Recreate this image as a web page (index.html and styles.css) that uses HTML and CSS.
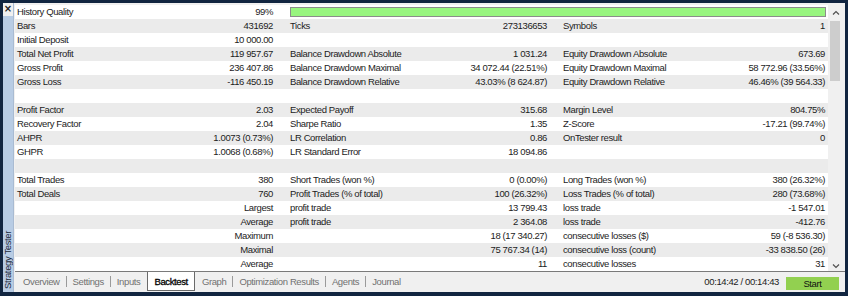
FILE: index.html
```html
<!DOCTYPE html>
<html>
<head>
<meta charset="utf-8">
<link rel="stylesheet" href="styles.css">
</head>
<body>
<div class="window">
  <div class="sidebar">
    <div class="close">×</div>
    <div class="strip"><span class="vlabel">Strategy Tester</span></div>
  </div>
  <div class="main">
    <div class="top">
      <div class="table">
        <div class="row">
          <div class="cell c1"><span>History Quality</span><span>99%</span></div>
          <div class="cell barcell"><div class="bar"></div></div>
        </div>
        <div class="row">
          <div class="cell c1"><span>Bars</span><span>431692</span></div>
          <div class="cell c2"><span>Ticks</span><span>273136653</span></div>
          <div class="cell c3"><span>Symbols</span><span>1</span></div>
        </div>
        <div class="row">
          <div class="cell c1"><span>Initial Deposit</span><span>10 000.00</span></div>
          <div class="cell c2"></div>
          <div class="cell c3"></div>
        </div>
        <div class="row">
          <div class="cell c1"><span>Total Net Profit</span><span>119 957.67</span></div>
          <div class="cell c2"><span>Balance Drawdown Absolute</span><span>1 031.24</span></div>
          <div class="cell c3"><span>Equity Drawdown Absolute</span><span>673.69</span></div>
        </div>
        <div class="row">
          <div class="cell c1"><span>Gross Profit</span><span>236 407.86</span></div>
          <div class="cell c2"><span>Balance Drawdown Maximal</span><span>34 072.44 (22.51%)</span></div>
          <div class="cell c3"><span>Equity Drawdown Maximal</span><span>58 772.96 (33.56%)</span></div>
        </div>
        <div class="row">
          <div class="cell c1"><span>Gross Loss</span><span>-116 450.19</span></div>
          <div class="cell c2"><span>Balance Drawdown Relative</span><span>43.03% (8 624.87)</span></div>
          <div class="cell c3"><span>Equity Drawdown Relative</span><span>46.46% (39 564.33)</span></div>
        </div>
        <div class="row">
          <div class="cell c1"></div><div class="cell c2"></div><div class="cell c3"></div>
        </div>
        <div class="row">
          <div class="cell c1"><span>Profit Factor</span><span>2.03</span></div>
          <div class="cell c2"><span>Expected Payoff</span><span>315.68</span></div>
          <div class="cell c3"><span>Margin Level</span><span>804.75%</span></div>
        </div>
        <div class="row">
          <div class="cell c1"><span>Recovery Factor</span><span>2.04</span></div>
          <div class="cell c2"><span>Sharpe Ratio</span><span>1.35</span></div>
          <div class="cell c3"><span>Z-Score</span><span>-17.21 (99.74%)</span></div>
        </div>
        <div class="row">
          <div class="cell c1"><span>AHPR</span><span>1.0073 (0.73%)</span></div>
          <div class="cell c2"><span>LR Correlation</span><span>0.86</span></div>
          <div class="cell c3"><span>OnTester result</span><span>0</span></div>
        </div>
        <div class="row">
          <div class="cell c1"><span>GHPR</span><span>1.0068 (0.68%)</span></div>
          <div class="cell c2"><span>LR Standard Error</span><span>18 094.86</span></div>
          <div class="cell c3"></div>
        </div>
        <div class="row">
          <div class="cell c1"></div><div class="cell c2"></div><div class="cell c3"></div>
        </div>
        <div class="row">
          <div class="cell c1"><span>Total Trades</span><span>380</span></div>
          <div class="cell c2"><span>Short Trades (won %)</span><span>0 (0.00%)</span></div>
          <div class="cell c3"><span>Long Trades (won %)</span><span>380 (26.32%)</span></div>
        </div>
        <div class="row">
          <div class="cell c1"><span>Total Deals</span><span>760</span></div>
          <div class="cell c2"><span>Profit Trades (% of total)</span><span>100 (26.32%)</span></div>
          <div class="cell c3"><span>Loss Trades (% of total)</span><span>280 (73.68%)</span></div>
        </div>
        <div class="row">
          <div class="cell c1"><span></span><span>Largest</span></div>
          <div class="cell c2"><span>profit trade</span><span>13 799.43</span></div>
          <div class="cell c3"><span>loss trade</span><span>-1 547.01</span></div>
        </div>
        <div class="row">
          <div class="cell c1"><span></span><span>Average</span></div>
          <div class="cell c2"><span>profit trade</span><span>2 364.08</span></div>
          <div class="cell c3"><span>loss trade</span><span>-412.76</span></div>
        </div>
        <div class="row">
          <div class="cell c1"><span></span><span>Maximum</span></div>
          <div class="cell c2"><span></span><span>18 (17 340.27)</span></div>
          <div class="cell c3"><span>consecutive losses ($)</span><span>59 (-8 536.30)</span></div>
        </div>
        <div class="row">
          <div class="cell c1"><span></span><span>Maximal</span></div>
          <div class="cell c2"><span></span><span>75 767.34 (14)</span></div>
          <div class="cell c3"><span>consecutive loss (count)</span><span>-33 838.50 (26)</span></div>
        </div>
        <div class="row">
          <div class="cell c1"><span></span><span>Average</span></div>
          <div class="cell c2"><span></span><span>11</span></div>
          <div class="cell c3"><span>consecutive losses</span><span>31</span></div>
        </div>
      </div>
      <div class="scrollbar">
        <svg class="arrow" width="8" height="5" viewBox="0 0 8 5"><path d="M1 4.5 L4 1.5 L7 4.5" fill="none" stroke="#505050" stroke-width="1.2"/></svg>
        <div class="thumb"></div>
        <div class="track"></div>
        <svg class="arrow" width="8" height="5" viewBox="0 0 8 5"><path d="M1 0.5 L4 3.5 L7 0.5" fill="none" stroke="#505050" stroke-width="1.2"/></svg>
      </div>
    </div>
    <div class="tabbar">
      <span class="tab">Overview</span><span class="sep"></span>
      <span class="tab">Settings</span><span class="sep"></span>
      <span class="tab">Inputs</span>
      <span class="tab active">Backtest</span>
      <span class="tab">Graph</span><span class="sep"></span>
      <span class="tab">Optimization Results</span><span class="sep"></span>
      <span class="tab">Agents</span><span class="sep"></span>
      <span class="tab">Journal</span>
      <span class="time">00:14:42 / 00:14:43</span>
      <span class="start">Start</span>
    </div>
  </div>
</div>
</body>
</html>
```

FILE: styles.css
```css
html, body {
  margin: 0;
  padding: 0;
  background: #112540;
}
body {
  width: 848px;
  height: 296px;
  overflow: hidden;
  font-family: "Liberation Sans", Arial, sans-serif;
  font-size: 9.5px;
  letter-spacing: -0.38px;
  color: #1c1c1c;
}
.window {
  margin: 3px 0 0 3px;
  width: 842px;
  height: 289px;
  background: #f0f0f0;
  display: flex;
}
.sidebar {
  width: 10px;
  border-right: 1px solid #a9bbd2;
  display: flex;
  flex-direction: column;
}
.close {
  height: 13px;
  line-height: 11px;
  text-align: center;
  font-family: "DejaVu Sans", sans-serif;
  font-size: 10px;
  font-weight: bold;
  letter-spacing: 0;
  color: #222;
  background: #f0f0f0;
}
.strip {
  flex: 1;
  background: #b8cce4;
  display: flex;
  flex-direction: column;
  justify-content: flex-end;
  align-items: center;
  padding-bottom: 3px;
}
.vlabel {
  writing-mode: vertical-rl;
  transform: rotate(180deg);
  font-size: 9.5px;
  line-height: 10px;
  color: #1d2a3a;
  white-space: nowrap;
}
.main {
  flex: 1;
  display: flex;
  flex-direction: column;
  padding-left: 1px;
}
.top {
  display: flex;
  padding-top: 2px;
  height: 266px;
}
.table {
  width: 813px;
  display: flex;
  flex-direction: column;
}
.row {
  display: grid;
  grid-template-columns: 271px 274px 268px;
  height: 14px;
  line-height: 14px;
  background: #ffffff;
}
.row:nth-child(even) {
  background: #ebebeb;
}
.cell {
  display: flex;
  justify-content: space-between;
  white-space: nowrap;
  overflow: hidden;
}
.c1 { padding: 0 13px 0 2px; }
.c2 { padding: 0 13px 0 4px; }
.c3 { padding: 0 3px 0 3px; }
.barcell {
  grid-column: 2 / span 2;
  padding: 2px 2px 2px 4px;
}
.bar {
  flex: 1;
  background: #98f57f;
  border: 1px solid #8c8c8c;
}
.scrollbar {
  width: 15px;
  display: flex;
  flex-direction: column;
  align-items: center;
  background: #f0f0f0;
  padding-top: 5px;
}
.arrow {
  display: block;
  margin: 0 0 6px 1px;
}
.thumb {
  width: 10px;
  height: 60px;
  background: #cdcdcd;
  margin-left: -1px;
}
.track {
  flex: 1;
}
.scrollbar .arrow:last-child {
  margin: 0 0 2px 1px;
}
.tabbar {
  flex: 1;
  display: flex;
  align-items: flex-start;
  border-top: 1px solid #7a7a7a;
  padding-left: 2px;
  color: #707070;
}
.tab {
  padding: 0 6px;
  height: 19px;
  line-height: 19px;
}
.sep {
  width: 1px;
  height: 11px;
  margin-top: 4px;
  background: #9a9a9a;
}
.tab.active {
  margin-left: 1px;
  background: #ffffff;
  border: 1px solid #6a6a6a;
  border-top: none;
  color: #000;
  -webkit-text-stroke: 0.3px #000;
  height: 18px;
  margin-right: 1px;
  padding: 0 6px;
}
.time {
  margin-left: auto;
  color: #1c1c1c;
  line-height: 19px;
  margin-right: 7px;
}
.start {
  margin-top: 5px;
  width: 53px;
  height: 13px;
  line-height: 13px;
  text-align: center;
  background: #92d050;
  color: #111;
  margin-right: 6px;
}
```
